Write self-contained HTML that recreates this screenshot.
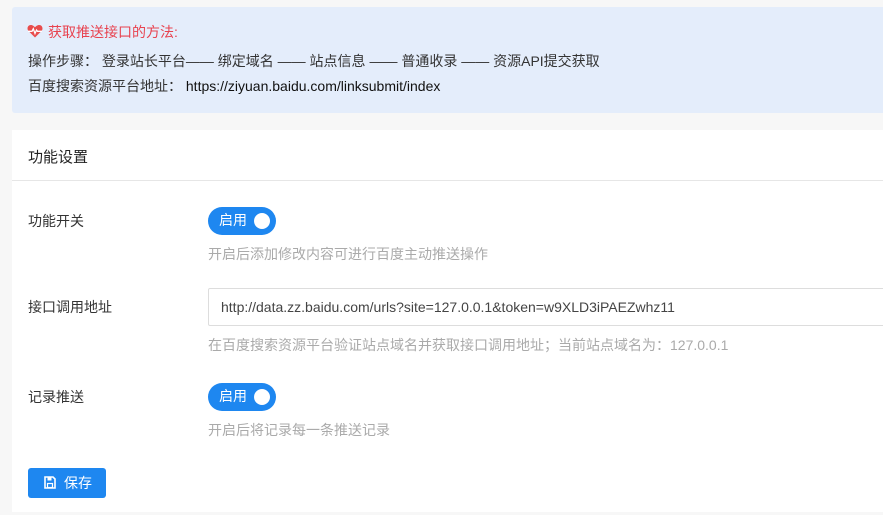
<!DOCTYPE html>
<html><head><meta charset="utf-8"><style>
*{box-sizing:border-box;margin:0;padding:0}
body{width:883px;height:515px;overflow:hidden;background:#f7f7f7;font-family:"Liberation Sans","Noto Sans CJK SC",sans-serif;font-size:14px;color:#333;position:relative;line-height:1.2}
.abs{position:absolute;white-space:nowrap}
.alert{position:absolute;left:12px;top:7px;width:880px;height:106px;background:#e4edfb;border-radius:3px}
.card{position:absolute;left:12px;top:130px;width:880px;height:382px;background:#fff}
.sw{position:absolute;left:208px;width:68px;height:28px;border-radius:14px;background:#1e87f0;color:#fff;font-size:14px}
.sw span{position:absolute;left:11px;top:5px;line-height:17px}
.sw i{position:absolute;right:6px;top:6px;width:16px;height:16px;border-radius:50%;background:#fff}
.help{color:#aaa;font-size:14px}
</style></head><body>
<div class="alert"></div>
<svg class="abs" style="left:27px;top:24px" width="16" height="14" viewBox="0 0 16 14"><path d="M8 13.5L1.5 7C-0.5 4.8 0.7 1 3.8 1 5.8 1 7 2.3 8 3.3 9 2.3 10.2 1 12.2 1 15.3 1 16.5 4.8 14.5 7Z" fill="#e84c4c"/><path d="M1 7.3H5L6.3 4.8 8 9.5 9.5 6 10.5 7.3H15" stroke="#fff" stroke-width="1.3" fill="none"/></svg>
<div class="abs" style="left:48px;top:24px;color:#e8424f">获取推送接口的方法:</div>
<div class="abs" style="left:28px;top:53px">操作步骤： 登录站长平台—— 绑定域名 —— 站点信息 —— 普通收录 —— 资源API提交获取</div>
<div class="abs" style="left:28px;top:78px">百度搜索资源平台地址： <span style="color:#111">https://ziyuan.baidu.com/linksubmit/index</span></div>
<div class="card"></div>
<div class="abs" style="left:28px;top:149px;font-size:15px;color:#222">功能设置</div>
<div class="abs" style="left:12px;top:180px;width:871px;height:1px;background:#e6e6e6"></div>
<div class="abs" style="left:28px;top:213px">功能开关</div>
<div class="sw" style="top:207px"><span>启用</span><i></i></div>
<div class="abs help" style="left:208px;top:246px">开启后添加修改内容可进行百度主动推送操作</div>
<div class="abs" style="left:28px;top:299px">接口调用地址</div>
<div class="abs" style="left:208px;top:288px;width:690px;height:38px;border:1px solid #ddd;border-radius:2px;padding:10px 0 0 12px;color:#444">http://data.zz.baidu.com/urls?site=127.0.0.1&amp;token=w9XLD3iPAEZwhz11</div>
<div class="abs help" style="left:208px;top:337px">在百度搜索资源平台验证站点域名并获取接口调用地址；当前站点域名为：127.0.0.1</div>
<div class="abs" style="left:28px;top:389px">记录推送</div>
<div class="sw" style="top:383px"><span>启用</span><i></i></div>
<div class="abs help" style="left:208px;top:422px">开启后将记录每一条推送记录</div>
<div class="abs" style="left:28px;top:468px;width:78px;height:30px;background:#1e87f0;border-radius:3px;color:#fff"><svg style="position:absolute;left:16px;top:8px" width="12" height="13" viewBox="0 0 12 13"><path d="M1 1H9L11 3V12H1Z" fill="none" stroke="#fff" stroke-width="1.6"/><rect x="3.5" y="1.5" width="4" height="3" fill="#fff"/><rect x="3.5" y="7.5" width="5" height="4" fill="none" stroke="#fff" stroke-width="1.2"/></svg><span style="position:absolute;left:36px;top:7px">保存</span></div>
</body></html>
